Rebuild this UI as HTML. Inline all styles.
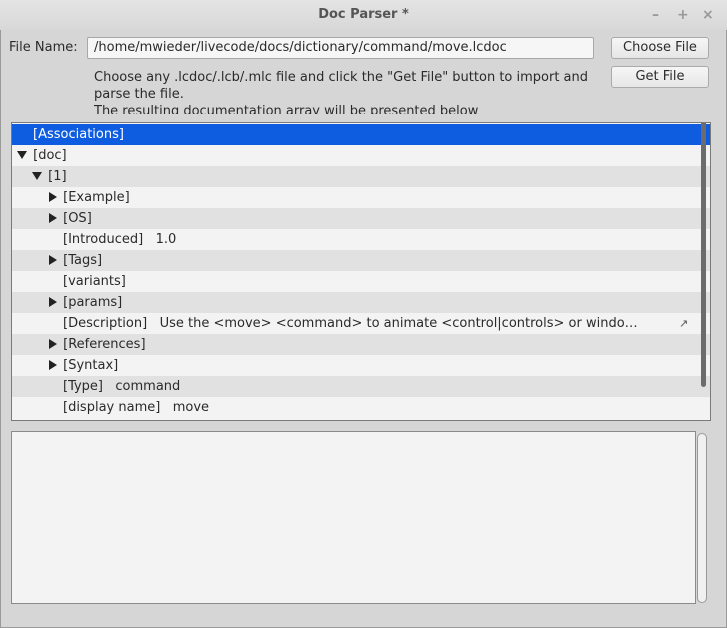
<!DOCTYPE html>
<html><head><style>
*{margin:0;padding:0;box-sizing:border-box}
body{width:727px;height:628px;background:#d6d6d6;font-family:"DejaVu Sans","Liberation Sans",sans-serif;font-size:13px;color:#2a2a2a;position:relative;overflow:hidden}
.win{position:absolute;left:0;top:0;width:727px;height:628px;border:1px solid #9a9a9a;border-radius:4px 4px 0 0}
.title{position:absolute;left:0;top:0;width:727px;height:30px;background:linear-gradient(#e4e4e4,#d8d8d8);text-align:center;line-height:30px;font-weight:bold;color:#555;font-size:13px}
.ctl{position:absolute;top:7px;color:#999;font-size:14px;font-weight:bold}
.abs{position:absolute}
.btn{position:absolute;left:611px;width:98px;height:22px;border:1px solid #aaa;border-radius:3px;background:linear-gradient(#f6f6f6,#e6e6e6);text-align:center;line-height:20px;color:#2a2a2a}
.input{position:absolute;left:87px;top:37px;width:507px;height:22px;border:1px solid #a8a8a8;background:#f6f6f6;padding-left:6px;line-height:20px;border-radius:2px}
.tree{position:absolute;left:11px;top:122px;width:700px;height:299px;border:1px solid #7a7a7a;background:#f3f3f3;overflow:hidden}
.row{height:21px;line-height:21px;white-space:nowrap;position:relative}
.row:nth-child(odd){background:#e1e1e1}
.row:nth-child(even){background:#f3f3f3}
.row.sel{background:#0e5de0;color:#fff}
.tri{display:inline-block;width:0;height:0;vertical-align:middle;margin-right:2px;position:relative;top:-1px}
.dn{border-left:5px solid transparent;border-right:5px solid transparent;border-top:8px solid #222}
.rt{border-top:5px solid transparent;border-bottom:5px solid transparent;border-left:8px solid #222}
.sb{position:absolute;left:689px;top:0;width:5px;height:264px;background:#6c6c6c;border-radius:0 0 3px 3px}
.txt{position:absolute;left:11px;top:431px;width:685px;height:173px;border:1px solid #8a8a8a;background:#f3f3f3}
.sb2{position:absolute;left:697px;top:433px;width:10px;height:170px;border:1px solid #999;border-radius:5px;background:#f0f0f0}
</style></head><body>
<div class="win"></div>
<div class="title">Doc Parser *</div>
<div class="ctl" style="left:652px">–</div>
<div class="ctl" style="left:677px">+</div>
<div class="ctl" style="left:702px">×</div>
<div class="abs" style="left:9px;top:40px">File Name:</div>
<div class="input">/home/mwieder/livecode/docs/dictionary/command/move.lcdoc</div>
<div class="btn" style="top:37px">Choose File</div>
<div class="btn" style="top:66px">Get File</div>
<div class="abs" style="left:94px;top:69px;width:510px;height:45px;overflow:hidden;line-height:17px">Choose any .lcdoc/.lcb/.mlc file and click the "Get File" button to import and parse the file.<br>The resulting documentation array will be presented below</div>
<div class="tree">
<div class="row sel" style="padding-left:21px;margin-top:1px">[Associations]</div>
<div class="row" style="padding-left:5px"><span class="tri dn"></span> [doc]</div>
<div class="row" style="padding-left:20px"><span class="tri dn"></span> [1]</div>
<div class="row" style="padding-left:37px"><span class="tri rt"></span> [Example]</div>
<div class="row" style="padding-left:37px"><span class="tri rt"></span> [OS]</div>
<div class="row" style="padding-left:51px">[Introduced]&nbsp;&nbsp; 1.0</div>
<div class="row" style="padding-left:37px"><span class="tri rt"></span> [Tags]</div>
<div class="row" style="padding-left:51px">[variants]</div>
<div class="row" style="padding-left:37px"><span class="tri rt"></span> [params]</div>
<div class="row" style="padding-left:51px">[Description]&nbsp;&nbsp; Use the &lt;move&gt; &lt;command&gt; to animate &lt;control|controls&gt; or windo…<span style="position:absolute;left:667px;font-size:11px;color:#555">↗</span></div>
<div class="row" style="padding-left:37px"><span class="tri rt"></span> [References]</div>
<div class="row" style="padding-left:37px"><span class="tri rt"></span> [Syntax]</div>
<div class="row" style="padding-left:51px">[Type]&nbsp;&nbsp; command</div>
<div class="row" style="padding-left:51px">[display name]&nbsp;&nbsp; move</div>
<div class="sb"></div>
</div>
<div class="txt"></div>
<div class="sb2"></div>
</body></html>
